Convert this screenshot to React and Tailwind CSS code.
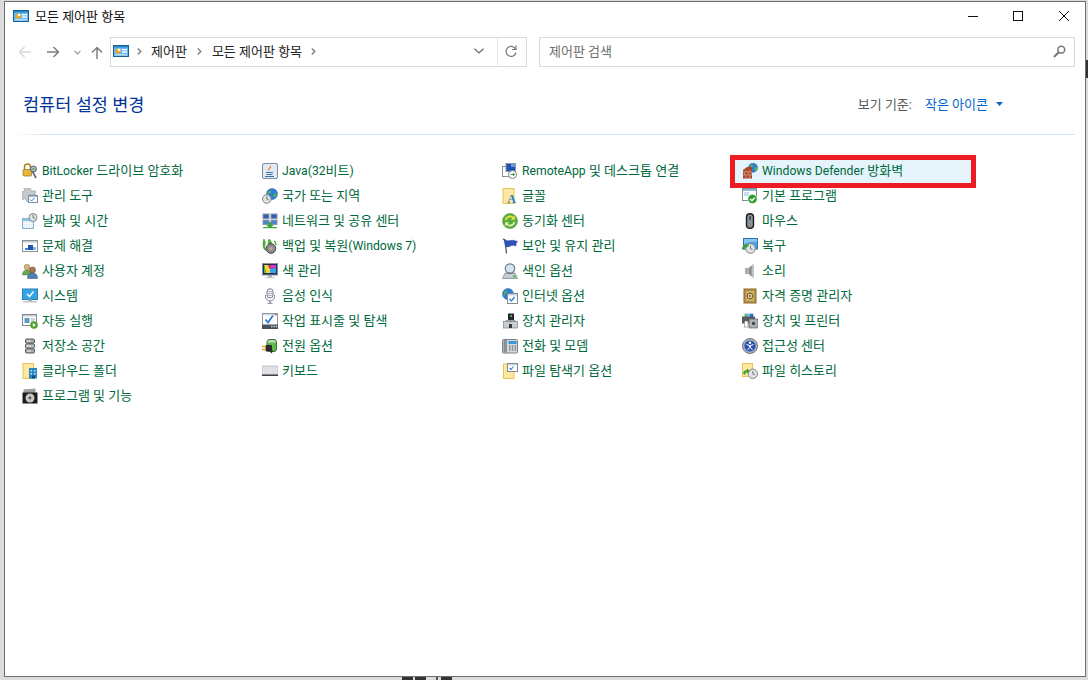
import React from "react";

const Svg = ({ children, size = 16 }) => (
  <svg width={size} height={size} viewBox="0 0 16 16" className="shrink-0">
    {children}
  </svg>
);

const Globe = ({ x = 8, y = 5, r = 4.5 }) => (
  <g>
    <circle cx={x} cy={y} r={r} fill="#2f7fd0" stroke="#1d5a9e" strokeWidth="0.5" />
    <path d={`M${x - r + 1} ${y - 1}q2 -3 4 -2.5l-1 2.5l-1.5 .5l-.5 2.5z`} fill="#5fb548" />
    <path d={`M${x + 1} ${y + 1}l3 -2l.5 2l-2 2.5z`} fill="#5fb548" />
  </g>
);

const Clock = ({ x = 11, y = 11, r = 4.5 }) => (
  <g>
    <circle cx={x} cy={y} r={r} fill="#dfe3e6" stroke="#7d8488" strokeWidth="1" />
    <path d={`M${x} ${y - 2.6}V${y}L${x + 2} ${y + 1}`} stroke="#555" strokeWidth="0.8" fill="none" />
  </g>
);

const Check = ({ d = "M5 8l2 2l4-5", c = "#2a7fd4", w = 1.4 }) => <path d={d} fill="none" stroke={c} strokeWidth={w} />;

const PanelIcon = () => (
  <Svg>
    <rect x="0.5" y="2.5" width="15" height="11" fill="#6cb8ea" stroke="#14609a" />
    <rect x="1" y="3" width="14" height="1.5" fill="#2b86c5" />
    <circle cx="5" cy="8" r="2.6" fill="#f5a623" />
    <path d="M5 8V5.4a2.6 2.6 0 0 1 2.6 2.6z" fill="#fff" />
    <rect x="9" y="6" width="5" height="1.4" fill="#fff" />
    <rect x="9" y="8.4" width="5" height="1.4" fill="#fff" />
    <rect x="2" y="11.2" width="12" height="1.2" fill="#c4e4f7" />
  </Svg>
);

const icons = {
  bitlocker: (
    <Svg>
      <path d="M2.5 7V4a3 3 0 0 1 6 0v3" fill="none" stroke="#a9851f" strokeWidth="1.5" />
      <rect x="1" y="6.5" width="8.5" height="6.5" rx="1" fill="#e5b93a" stroke="#94711a" strokeWidth="0.7" />
      <circle cx="11.5" cy="6" r="3" fill="#b4bcc0" stroke="#5b6468" />
      <circle cx="11.5" cy="6" r="1" fill="#4f9f3d" />
      <path d="M10.5 8.5L14 15" stroke="#5b6468" strokeWidth="1.6" />
    </Svg>
  ),
  admin: (
    <Svg>
      <path d="M6 0.5h2.5l.4 2l1.8.8l1.7-1.1l1.6 1.7l-1.1 1.6l.6 1.5H7v6.5H4.6l-.4-2l-1.6-.7l-1.7 1.1l-1-1.6l1-1.7l-.6-1.6L-.1 6V3.8l2.1-.3l.7-1.6L1.6.8z" fill="#c5cacd" stroke="#8f979b" strokeWidth="0.6" />
      <rect x="6.5" y="7.5" width="9" height="7" fill="#fff" stroke="#7d8f9e" />
      <rect x="7" y="8" width="8" height="1.3" fill="#a8c8e2" />
      <Check d="M8 11.5l1.5 1.5l3-3" w={1} />
    </Svg>
  ),
  datetime: (
    <Svg>
      <rect x="0.5" y="5.5" width="11" height="10" fill="#d7ecf9" stroke="#8fb3cb" />
      <rect x="1" y="6" width="10" height="2" fill="#8cc4e8" />
      <path d="M3.5 8v7M6 8v7M8.5 8v7M1 10.5h10M1 13h10" stroke="#fff" strokeWidth="0.8" />
      <Clock x={11} y={4.5} r={4} />
    </Svg>
  ),
  trouble: (
    <Svg>
      <rect x="0.5" y="2.5" width="15" height="11" fill="#fff" stroke="#8a9095" />
      <rect x="1" y="3" width="14" height="1.5" fill="#c6ccd1" />
      <rect x="6" y="7" width="5" height="5" fill="#1c56b0" />
      <rect x="3" y="10" width="3" height="2" fill="#3d80d4" />
      <rect x="11" y="9" width="3" height="3" fill="#8db3d8" />
    </Svg>
  ),
  users: (
    <Svg>
      <circle cx="5" cy="4" r="2.8" fill="#d9b27c" stroke="#8f6f3f" strokeWidth="0.5" />
      <path d="M0.5 12q0-5 4.5-5t4 5z" fill="#6aa84f" stroke="#4d7f37" strokeWidth="0.5" />
      <circle cx="10.5" cy="7" r="3" fill="#a8794f" stroke="#5d4025" strokeWidth="0.5" />
      <path d="M5.5 15.5q0-5.5 5-5.5t5 5.5z" fill="#4c7fb5" stroke="#2c5684" strokeWidth="0.5" />
    </Svg>
  ),
  system: (
    <Svg>
      <rect x="0.5" y="1" width="15" height="10.5" fill="#35a4e6" stroke="#2a7fb8" />
      <Check d="M5 6l2.5 2.5l4-5" c="#fff" w={1.5} />
      <rect x="6" y="11.5" width="4" height="1.5" fill="#a7adb2" />
      <rect x="1" y="13" width="14" height="1.5" fill="#c2c7cb" />
    </Svg>
  ),
  autoplay: (
    <Svg>
      <rect x="0.5" y="1.5" width="14" height="11" fill="#fff" stroke="#80868b" />
      <rect x="1" y="2" width="13" height="1.5" fill="#c6ccd1" />
      <rect x="2.5" y="5" width="5" height="5" fill="#5e9bc7" />
      <path d="M9 6h4M9 8h3" stroke="#9aa4ab" />
      <circle cx="12" cy="12" r="3.8" fill="#49a52e" />
      <path d="M10.8 10v4l3-2z" fill="#fff" />
    </Svg>
  ),
  storage: (
    <Svg>
      <rect x="3.5" y="1" width="9" height="4.2" rx="1.2" fill="#a4a8ac" stroke="#55595d" />
      <rect x="3.5" y="5.9" width="9" height="4.2" rx="1.2" fill="#b9bdc0" stroke="#55595d" />
      <rect x="3.5" y="10.8" width="9" height="4.2" rx="1.2" fill="#a4a8ac" stroke="#55595d" />
      <path d="M5 3h4M5 8h4M5 13h4" stroke="#eee" />
    </Svg>
  ),
  work: (
    <Svg>
      <rect x="1" y="0.5" width="10.5" height="15" fill="#fde8a2" stroke="#e8c253" />
      <rect x="7" y="5" width="8" height="10.5" fill="#2787c6" />
      <path d="M8.5 7h1.5v1.5H8.5zM12 7h1.5v1.5H12zM8.5 10h1.5v1.5H8.5zM12 10h1.5v1.5H12z" fill="#bfe3f7" />
      <rect x="10" y="12.5" width="3" height="3" fill="#0f4f7c" />
    </Svg>
  ),
  programs: (
    <Svg>
      <path d="M1.5 1.5l12-1V5h-12z" fill="#9aa39c" />
      <rect x="0.5" y="4.5" width="15" height="11" fill="#1d1d1d" />
      <circle cx="8" cy="10" r="4.5" fill="#c8c8c4" />
      <circle cx="8" cy="10" r="1.4" fill="#555" />
    </Svg>
  ),
  java: (
    <Svg>
      <rect x="0.5" y="0.5" width="15" height="15" rx="1.5" fill="#e2eaf2" stroke="#7e8b98" />
      <path d="M8.5 2q1.5 2-.5 3.5t-.5 3q-2.5-1.5-.5-3.5t1.5-3z" fill="#e2772a" />
      <path d="M4 9.5h7M4.5 11.5h6M3 13.5h9" stroke="#3e6fa6" strokeWidth="1" />
    </Svg>
  ),
  region: (
    <Svg>
      <Globe x={10} y={6} r={5.5} />
      <Clock x={4.8} y={11} r={4.3} />
    </Svg>
  ),
  network: (
    <Svg>
      <rect x="1" y="1" width="6" height="4.5" fill="#2f5fb5" stroke="#8d99a6" />
      <rect x="9" y="1" width="6" height="4.5" fill="#2f5fb5" stroke="#8d99a6" />
      <rect x="1" y="7" width="6" height="4.5" fill="#4d83cf" stroke="#8d99a6" />
      <rect x="9" y="7" width="6" height="4.5" fill="#4d83cf" stroke="#8d99a6" />
      <path d="M6.5 9h3v3H12l-4 3l-4-3h2.500z" fill="#3fa535" />
      <rect x="1" y="14" width="14" height="1.2" fill="#3fa535" />
    </Svg>
  ),
  backup: (
    <Svg>
      <path d="M2 1q2 3 1 6t2 6q-4-1-4-6t1-6zM7 1q4 3 2.500 8L7 8q-2-3 0-7z" fill="#57b636" stroke="#2e7a1b" strokeWidth="0.5" />
      <circle cx="9" cy="10.500" r="4.800" fill="#8b8f92" stroke="#404346" />
      <circle cx="9" cy="10.500" r="1.600" fill="#d9a890" />
      <path d="M12 3q2 1 2 4" stroke="#57b636" strokeWidth="1.5" fill="none" />
    </Svg>
  ),
  color: (
    <Svg>
      <rect x="0.5" y="0.5" width="15" height="11.500" fill="#1f2f57" stroke="#8c949b" />
      <path d="M2 2h4l2 4v4H4z" fill="#f2d83a" />
      <path d="M6 2h3l-1 4z" fill="#e23a3a" />
      <path d="M9 2h5v3L8 6z" fill="#d83ad0" />
      <path d="M14 5v5H8V6z" fill="#38a6e8" />
      <path d="M2 2v8h2z" fill="#4ec24a" />
      <rect x="6" y="12" width="4" height="2" fill="#a7adb2" />
      <rect x="3.500" y="14" width="9" height="1.200" fill="#c2c7cb" />
    </Svg>
  ),
  speech: (
    <Svg>
      <rect x="5" y="0.700" width="6" height="9.300" rx="3" fill="#eef0f5" stroke="#7e8294" />
      <path d="M5.500 3.500h5M5.500 5.500h5M5.500 7.500h5" stroke="#9a9eb0" strokeWidth="0.7" />
      <path d="M3.500 7v1.500a4.500 4.500 0 0 0 9 0V7M8 13v2M5.500 15.300h5" fill="none" stroke="#7e8294" />
    </Svg>
  ),
  taskbar: (
    <Svg>
      <rect x="0.500" y="0.500" width="15" height="15" fill="#fff" stroke="#8d99a6" />
      <rect x="1" y="1" width="14" height="1.300" fill="#cfd8e0" />
      <rect x="12.500" y="1" width="2" height="1.300" fill="#e0584a" />
      <Check d="M3.500 6.500l2.500 3l5-7" w={1.800} />
      <rect x="0" y="11.500" width="16" height="4.500" fill="#47525c" />
      <path d="M9 13.500h1.500M11.500 13.500H13M13.800 13.500h1.500" stroke="#c7ced4" strokeWidth="1.400" />
    </Svg>
  ),
  power: (
    <Svg>
      <rect x="5" y="1.500" width="9.500" height="12" rx="2.500" fill="#5cbb4a" stroke="#2f7a24" />
      <path d="M5.500 3q4-2 8.500 0v1.500H5.500z" fill="#c9d2cc" />
      <rect x="3.500" y="7" width="6.500" height="6.500" rx="1" fill="#2c2c2c" />
      <path d="M0 8.500h4M0 11.500h4" stroke="#d8a62a" strokeWidth="1.300" />
      <path d="M9 11q2 2 0 4" stroke="#2c2c2c" strokeWidth="1.200" fill="none" />
    </Svg>
  ),
  keyboard: (
    <Svg>
      <rect x="0" y="3" width="16" height="9.500" fill="#d6d9dc" stroke="#a4a9ad" strokeWidth="0.500" />
      <path d="M1 5h14M1 7h14M1 9h14" stroke="#f4f5f6" strokeWidth="1.100" strokeDasharray="1 .6" />
      <rect x="0" y="11.500" width="16" height="1.500" fill="#3d4043" />
    </Svg>
  ),
  remote: (
    <Svg>
      <rect x="0.500" y="3.500" width="11" height="10" fill="#fff" stroke="#8a9095" />
      <rect x="4" y="0.500" width="9.500" height="8" fill="#1e4fb4" stroke="#8a9aa8" />
      <rect x="9" y="1" width="4" height="3" fill="#6a9be0" />
      <circle cx="10.500" cy="11.500" r="4" fill="#fff" stroke="#7a8085" />
      <path d="M8.500 11.500h4M11 10l1.500 1.500L11 13" stroke="#3d9a2e" fill="none" />
    </Svg>
  ),
  fonts: (
    <Svg>
      <rect x="1" y="0.500" width="11" height="15" fill="#fde8a2" stroke="#e8c253" />
      <text x="9.500" y="14.500" fontSize="12" fontWeight="700" textAnchor="middle" fill="#1b7fc6" fontFamily="'Liberation Serif',serif">A</text>
    </Svg>
  ),
  sync: (
    <Svg>
      <circle cx="8" cy="8" r="7.500" fill="#58b03c" stroke="#3d8a28" strokeWidth="0.500" />
      <path d="M3.500 7a4.700 4.700 0 0 1 8-2" fill="none" stroke="#f4e04a" strokeWidth="1.800" />
      <path d="M12.800 2.700v4h-4z" fill="#f4e04a" />
      <path d="M12.500 9a4.700 4.700 0 0 1-8 2" fill="none" stroke="#e8eeb0" strokeWidth="1.800" />
      <path d="M3.200 13.300v-4h4z" fill="#e8eeb0" />
    </Svg>
  ),
  security: (
    <Svg>
      <path d="M1 1l2 1l1.500 13.500" fill="none" stroke="#4a5668" strokeWidth="1.300" />
      <path d="M2 1.500q3 2 6 1t7.500 1q-2 2-1.500 4.500q-3-1.500-5.500 0t-5 .5z" fill="#2f52b8" stroke="#1c3a8e" strokeWidth="0.400" />
    </Svg>
  ),
  indexing: (
    <Svg>
      <path d="M3 10h10l2.500 5.500H.5z" fill="#c8ccd0" stroke="#777c80" strokeWidth="0.700" />
      <rect x="11" y="12.500" width="2.500" height="1.800" fill="#3fae3a" />
      <circle cx="8" cy="5.500" r="4.700" fill="#d4e6f4" stroke="#6f7b86" strokeWidth="1.200" />
      <path d="M4.500 11q3.500-3 7 0z" fill="#6d7a88" />
    </Svg>
  ),
  internet: (
    <Svg>
      <Globe x={6} y={6} r={5.500} />
      <rect x="5.500" y="5.500" width="10" height="10" fill="#fff" stroke="#7e8a94" />
      <rect x="6" y="6" width="9" height="1.500" fill="#c8d3dc" />
      <Check d="M7.500 11l2 2l3-4" w={1.300} />
    </Svg>
  ),
  devman: (
    <Svg>
      <rect x="6" y="0.500" width="6" height="8" fill="#26292c" />
      <rect x="8.500" y="2" width="1.500" height="2" fill="#5cbb4a" />
      <path d="M4 7h9l1.500 1.500H2.500z" fill="#9aa0a4" />
      <rect x="1.500" y="8.500" width="14" height="6.500" fill="#c9cdd0" stroke="#7c8185" strokeWidth="0.700" />
      <rect x="7" y="11" width="3" height="4" fill="#35393c" />
    </Svg>
  ),
  phone: (
    <Svg>
      <rect x="0.500" y="1.500" width="15" height="13.500" rx="1" fill="#d6dadd" stroke="#7a8085" />
      <rect x="1.500" y="2" width="3.500" height="12.500" fill="#8a9095" />
      <rect x="6.500" y="3" width="8" height="3" fill="#3a96d8" />
      <path d="M7 8h1.500M9.800 8h1.500M12.600 8H14M7 10h1.500M9.800 10h1.500M12.600 10H14M7 12h1.500M9.800 12h1.500M12.600 12H14" stroke="#4e5458" />
    </Svg>
  ),
  explorer: (
    <Svg>
      <rect x="1.500" y="1" width="10.500" height="14.500" fill="#fde8a2" stroke="#e8c253" />
      <rect x="5.500" y="0.500" width="10" height="8" fill="#fff" stroke="#7e8a94" />
      <rect x="6" y="1" width="9" height="1.300" fill="#c8d3dc" />
      <Check d="M7.500 5l1.500 1.500l2.500-3" w={1.100} />
    </Svg>
  ),
  firewall: (
    <Svg>
      <Globe x={11} y={4.800} r={4.500} />
      <path d="M1 7l4-3h5v11.500H1z" fill="#a8472a" />
      <path d="M1 9h9M1 12h9M4 7v2M7.500 7v2M2.500 9v3M6 9v3M9 9v3M4 12v3.500M7.500 12v3.500" stroke="#dfb49e" strokeWidth="0.600" />
    </Svg>
  ),
  defaults: (
    <Svg>
      <rect x="0.500" y="0.500" width="14" height="12" fill="#fff" stroke="#7e8a94" />
      <rect x="1" y="1" width="13" height="2" fill="#8db8dc" />
      <rect x="2" y="4" width="5" height="4" fill="#c7dff0" />
      <circle cx="10.500" cy="11" r="4.700" fill="#2f9e32" stroke="#fff" strokeWidth="0.700" />
      <Check d="M8.200 11l1.800 1.800l2.800-3.200" c="#fff" w={1.400} />
    </Svg>
  ),
  mouse: (
    <Svg>
      <rect x="4.500" y="0.700" width="7" height="14.600" rx="3.400" fill="#8a9298" stroke="#1c1c1c" strokeWidth="1.400" />
      <rect x="7.300" y="3" width="1.400" height="4" rx="0.700" fill="#33383c" />
    </Svg>
  ),
  recovery: (
    <Svg>
      <rect x="1.500" y="0.500" width="14" height="10.500" fill="#4ba4e0" stroke="#2a76b0" />
      <path d="M2 1h13v3q-6-1-13 2z" fill="#86c6ee" />
      <Clock x={8.500} y={10.500} r={4.800} />
      <path d="M0 11.500a4.500 4.500 0 0 1 4-5l0-1.500l3 2.500l-3 2.500v-1.500q-1.500 1-1.500 3z" fill="#3f9f2c" />
    </Svg>
  ),
  sound: (
    <Svg>
      <rect x="3" y="5" width="3.500" height="6" fill="#a9adb0" />
      <path d="M6.500 5L11.500 1v14l-5-4z" fill="#8d9194" />
      <path d="M10.300 2v12" stroke="#c7cbce" strokeWidth="1" />
    </Svg>
  ),
  credential: (
    <Svg>
      <rect x="2" y="1" width="12" height="14" fill="#bd9a4c" stroke="#86682a" />
      <rect x="3.500" y="2.500" width="9" height="11" fill="#cdb069" stroke="#9a7c3a" strokeWidth="0.500" />
      <circle cx="8" cy="8" r="2.800" fill="#e3d4a8" stroke="#6a5320" />
      <circle cx="8" cy="8" r="0.900" fill="#6a5320" />
    </Svg>
  ),
  devices: (
    <Svg>
      <rect x="2.500" y="0.500" width="9" height="4" fill="#7ab9e6" />
      <path d="M3 1h2v3H3z" fill="#4ec24a" />
      <path d="M8 1h3v3H8z" fill="#2a6ad0" />
      <rect x="0" y="3.500" width="13" height="7" fill="#565b5f" />
      <rect x="2.500" y="8" width="3.500" height="6" fill="#fff" stroke="#666" strokeWidth="0.500" />
      <rect x="7" y="6" width="9" height="9" fill="#a8adb1" stroke="#54585c" strokeWidth="0.600" />
      <circle cx="11.500" cy="10.500" r="2.400" fill="#4a4f53" stroke="#e4e6e8" strokeWidth="0.700" />
    </Svg>
  ),
  ease: (
    <Svg>
      <circle cx="8" cy="8" r="7.500" fill="#b2b7bb" stroke="#6e7478" />
      <circle cx="8" cy="8" r="5.600" fill="#2a52b8" />
      <circle cx="8" cy="4.800" r="1.200" fill="#fff" />
      <path d="M4.500 6.500l3 1v2l-2 2.500M11.500 6.500l-3 1v2l2 2.500" stroke="#fff" strokeWidth="1" fill="none" />
    </Svg>
  ),
  history: (
    <Svg>
      <rect x="0.500" y="0.500" width="10" height="13" fill="#fde8a2" stroke="#e8c253" />
      <Clock x={10.800} y={10.800} r={4.700} />
      <path d="M1 10.500a4 4 0 0 1 4-3.500v-1.500l3 2.500l-3 2.500v-1.500q-1.500.5-2 3z" fill="#3f9f2c" />
    </Svg>
  ),
};

// latin runs sit a bit smaller than the hangul next to them
const L = ({ children }) => <span className="text-[12.2px]">{children}</span>;

const columns = [
  [
    ["bitlocker", <><L>BitLocker</L> 드라이브 암호화</>],
    ["admin", "관리 도구"],
    ["datetime", "날짜 및 시간"],
    ["trouble", "문제 해결"],
    ["users", "사용자 계정"],
    ["system", "시스템"],
    ["autoplay", "자동 실행"],
    ["storage", "저장소 공간"],
    ["work", "클라우드 폴더"],
    ["programs", "프로그램 및 기능"],
  ],
  [
    ["java", <><L>Java(32</L>비트<L>)</L></>],
    ["region", "국가 또는 지역"],
    ["network", "네트워크 및 공유 센터"],
    ["backup", <>백업 및 복원<L>(Windows 7)</L></>],
    ["color", "색 관리"],
    ["speech", "음성 인식"],
    ["taskbar", "작업 표시줄 및 탐색"],
    ["power", "전원 옵션"],
    ["keyboard", "키보드"],
  ],
  [
    ["remote", <><L>RemoteApp</L> 및 데스크톱 연결</>],
    ["fonts", "글꼴"],
    ["sync", "동기화 센터"],
    ["security", "보안 및 유지 관리"],
    ["indexing", "색인 옵션"],
    ["internet", "인터넷 옵션"],
    ["devman", "장치 관리자"],
    ["phone", "전화 및 모뎀"],
    ["explorer", "파일 탐색기 옵션"],
  ],
  [
    ["firewall", <><L>Windows Defender</L> 방화벽</>, true],
    ["defaults", "기본 프로그램"],
    ["mouse", "마우스"],
    ["recovery", "복구"],
    ["sound", "소리"],
    ["credential", "자격 증명 관리자"],
    ["devices", "장치 및 프린터"],
    ["ease", "접근성 센터"],
    ["history", "파일 히스토리"],
  ],
];

const Item = ({ icon, label, selected }) => {
  if (selected) {
    return (
      <div className="relative flex h-[25px] w-[236px] -ml-[7px] pl-[7px] items-center gap-1 bg-[#e5f3fb]">
        {icons[icon]}
        <span>{label}</span>
        <div className="absolute -left-[5px] -top-[3px] h-[33px] w-[246px] border-[5px] border-[#ed1c24]"></div>
      </div>
    );
  }
  return (
    <div className="flex h-[25px] items-center gap-1">
      {icons[icon]}
      <span>{label}</span>
    </div>
  );
};

const Chevron = () => (
  <svg width="5" height="7" viewBox="0 0 5 7" className="shrink-0">
    <path d="M0.800 0.500L3.800 3.500L0.800 6.500" fill="none" stroke="#808080" strokeWidth="1.400" />
  </svg>
);

export default function App() {
  return (
    <div className="relative h-[680px] w-[1088px] overflow-hidden bg-[#dcdcdc] font-['Roboto','Noto_Sans_CJK_KR',sans-serif] text-[13px] leading-none">
      {/* bits of the page behind the window */}
      <div className="absolute bottom-0 left-[402px] h-[3px] w-[11px] bg-[#333]"></div>
      <div className="absolute bottom-0 left-[415px] h-[3px] w-[11px] bg-[#333]"></div>
      <div className="absolute bottom-0 left-[436px] h-[3px] w-[2px] bg-[#555]"></div>
      <div className="absolute bottom-0 left-[441px] h-[3px] w-[11px] bg-[#333]"></div>
      <div className="absolute right-0 top-[60px] h-[18px] w-[2px] bg-[#333]"></div>

      <div className="relative ml-1 mt-px flex h-[676px] w-[1082px] flex-col border border-[#6e6e6e] bg-white">
        {/* title bar */}
        <div className="flex h-[28px] shrink-0 items-center pl-[8px] text-[#111]">
          <PanelIcon />
          <span className="ml-[6px]">모든 제어판 항목</span>
          <div className="ml-auto flex items-center pr-[16px]">
            <svg width="10" height="10" viewBox="0 0 10 10" className="mr-[35px]">
              <path d="M0 5.500H10" stroke="#111" />
            </svg>
            <svg width="10" height="10" viewBox="0 0 10 10" className="mr-[36px]">
              <rect x="0.500" y="0.500" width="9" height="9" fill="none" stroke="#111" />
            </svg>
            <svg width="10" height="10" viewBox="0 0 10 10">
              <path d="M0 0L10 10M10 0L0 10" stroke="#111" />
            </svg>
          </div>
        </div>

        {/* nav bar */}
        <div className="mt-[7px] flex h-[30px] shrink-0 items-center pl-[13px] pr-[8px]">
          <svg width="13" height="12" viewBox="0 0 13 12" className="shrink-0">
            <path d="M13 6H1.500M6.500 1L1.500 6L6.500 11" fill="none" stroke="#d9d9d9" strokeWidth="1.500" />
          </svg>
          <svg width="13" height="12" viewBox="0 0 13 12" className="ml-[16px] shrink-0">
            <path d="M0 6H11.500M6.500 1L11.500 6L6.500 11" fill="none" stroke="#7f7f7f" strokeWidth="1.500" />
          </svg>
          <svg width="7" height="5" viewBox="0 0 7 5" className="ml-[14px] shrink-0">
            <path d="M0.500 0.800L3.500 3.800L6.500 0.800" fill="none" stroke="#999" strokeWidth="1.200" />
          </svg>
          <svg width="12" height="13" viewBox="0 0 12 13" className="ml-[10px] shrink-0">
            <path d="M6 13V1.500M1 6.500L6 1.500L11 6.500" fill="none" stroke="#7f7f7f" strokeWidth="1.500" />
          </svg>

          <div className="ml-[7px] flex h-[30px] w-[417px] items-center border border-[#d9d9d9] pb-[2px] pl-[2px] text-[#222]">
            <PanelIcon />
            <span className="ml-[8px]"><Chevron /></span>
            <span className="ml-[9px]">제어판</span>
            <span className="ml-[10px]"><Chevron /></span>
            <span className="ml-[10px]">모든 제어판 항목</span>
            <span className="ml-[9px]"><Chevron /></span>
            <svg width="10" height="6" viewBox="0 0 10 6" className="ml-auto shrink-0">
              <path d="M0.500 0.800L5 5L9.500 0.800" fill="none" stroke="#666" strokeWidth="1.200" />
            </svg>
            <div className="ml-[13px] h-[28px] w-px bg-[#e3e3e3]"></div>
            <svg width="12" height="13" viewBox="0 0 12 13" className="ml-[7px] mr-[9px] shrink-0">
              <path d="M10.500 4A5 5 0 1 0 11 7.500" fill="none" stroke="#777" strokeWidth="1.200" />
              <path d="M11 0.500V4.500H7" fill="none" stroke="#777" strokeWidth="1.200" />
            </svg>
          </div>

          <div className="ml-[12px] flex h-[30px] w-[536px] items-center justify-between border border-[#d9d9d9] pb-[2px] pl-[9px] pr-[8px] text-[#6d6d6d]">
            <span>제어판 검색</span>
            <svg width="13" height="13" viewBox="0 0 13 13" className="shrink-0">
              <circle cx="8.300" cy="4.700" r="3.400" fill="none" stroke="#777" strokeWidth="1.500" />
              <path d="M5.700 7.300L1 12" stroke="#777" strokeWidth="2" />
            </svg>
          </div>
        </div>

        {/* heading row */}
        <div className="mt-[20px] flex h-[34px] shrink-0 items-center pl-[18px] pr-[82px]">
          <h1 className="mt-[3px] text-[17.5px] font-normal text-[#003399]">컴퓨터 설정 변경</h1>
          <span className="ml-auto text-[#5c5c5c]">보기 기준:</span>
          <span className="ml-[13px] text-[#0066cc]">작은 아이콘</span>
          <svg width="7" height="4" viewBox="0 0 7 4" className="ml-[8px] shrink-0">
            <path d="M0 0H7L3.500 4z" fill="#0f62c8" />
          </svg>
        </div>

        <div className="mt-[13px] mx-[10px] h-px shrink-0 bg-gradient-to-r from-white via-[#d5e4f0] via-[3%] to-[#d5e4f0]"></div>

        {/* item columns */}
        <div className="mt-[23px] grid w-[977px] grid-cols-4 pl-[17px] text-[#00693c]">
          {columns.map((col, i) => (
            <div key={"col" + i} className="flex flex-col">
              {col.map(([icon, label, selected]) => (
                <Item key={icon} icon={icon} label={label} selected={selected} />
              ))}
            </div>
          ))}
        </div>
      </div>
    </div>
  );
}
